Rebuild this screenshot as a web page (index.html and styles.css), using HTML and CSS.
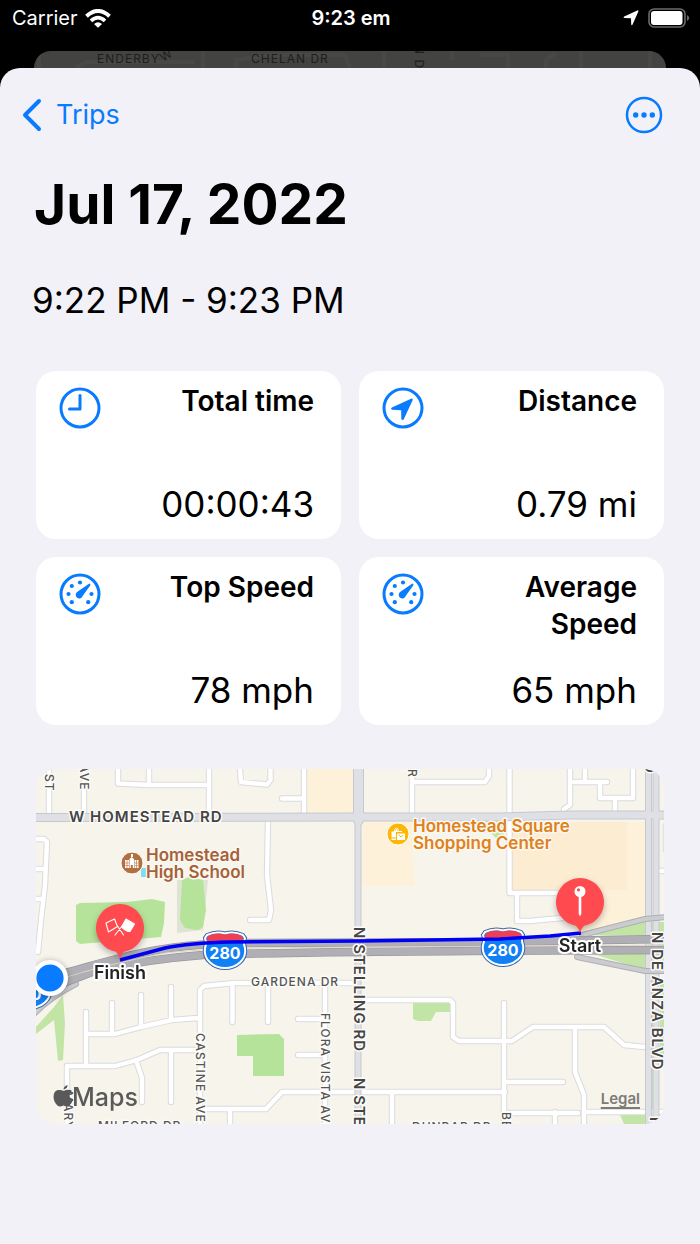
FILE: index.html
```html
<!DOCTYPE html>
<html lang="en">
<head>
<meta charset="utf-8">
<meta name="viewport" content="width=device-width, initial-scale=1">
<title>Jul 17, 2022</title>
<link rel="stylesheet" href="styles.css">
</head>
<body>
<header class="status">
  <div class="status-left">
    <span>Carrier</span>
    <svg class="wifi" viewBox="0 0 26 19" aria-hidden="true">
      <path d="M1.500 7.200Q13-3.200 24.500 7.200" stroke-width="4"/>
      <path d="M6 11.800Q13 5.400 20 11.800" stroke-width="3.600"/>
      <path d="M13 18.800L9 14.900Q13 11.400 17 14.900Z" class="wifi-dot"/>
    </svg>
  </div>
  <time class="status-time">9:23 em</time>
  <div class="status-right">
    <svg class="arrow" viewBox="0 0 16 16" aria-hidden="true"><path d="M14.300.4Q15.900.1 15.200 1.800L9.600 14.600Q8.800 15.800 8.200 14.500L8 8.200 1.400 8Q-.4 7.500 1.200 6.500Z"/></svg>
    <svg class="battery" viewBox="0 0 42 20" aria-hidden="true">
      <rect x="1" y="1" width="36" height="18" rx="5" fill="none" stroke="#6b6b6b" stroke-width="1.600"/>
      <rect x="3" y="3" width="31.500" height="14" rx="3" fill="#fff"/>
      <path d="M39 7Q43.500 10 39 13Z" fill="#6b6b6b"/>
    </svg>
  </div>
</header>

<div class="peek" aria-hidden="true">
  <svg class="peek-map" viewBox="34 51 632 17" preserveAspectRatio="xMidYMin slice">
    <g fill="none" stroke="#484847" stroke-width="4">
      <path d="M39 51V68M76 68L86 62H195M203 51V68M236 68V60L270 55H345L350 68M384 51V68M452 51V60M480 55H508V68M546 68V60L556 53M581 51V68M650 51V68"/>
    </g>
    <g class="peek-label">
      <text x="97" y="63">ENDERBY</text>
      <text transform="translate(163 62) rotate(-32)">W</text>
      <text x="251" y="63">CHELAN DR</text>
      <text transform="translate(415 45) rotate(90)">N D</text>
    </g>
  </svg>
</div>

<main class="sheet">
  <nav class="nav">
    <a class="back" href="#trips">
      <svg class="chevron" viewBox="0 0 20 34" aria-hidden="true"><path d="M17 3L3 17L17 31"/></svg>
      <span>Trips</span>
    </a>
    <button class="more" type="button" aria-label="More options">
      <svg viewBox="0 0 38 38" aria-hidden="true"><circle cx="19" cy="19" r="17" fill="none" stroke="currentColor" stroke-width="2.500"/><g fill="currentColor"><circle cx="10.700" cy="19" r="2.700"/><circle cx="19" cy="19" r="2.700"/><circle cx="27.300" cy="19" r="2.700"/></g></svg>
    </button>
  </nav>

  <h1 class="title">Jul 17, 2022</h1>
  <p class="period">9:22 PM - 9:23 PM</p>

  <section class="stats">
    <article class="card">
      <div class="card-head">
        <svg class="icon" viewBox="0 0 42 42" aria-hidden="true"><circle cx="21" cy="21" r="19"/><path d="M21 8.500V22H10.500"/></svg>
        <h2 class="card-title">Total time</h2>
      </div>
      <p class="value">00:00:43</p>
    </article>
    <article class="card">
      <div class="card-head">
        <svg class="icon" viewBox="0 0 42 42" aria-hidden="true"><circle cx="21" cy="21" r="19"/><path class="solid" d="M29 11.700Q31.300 11.200 30.600 13.300L21.800 32.200Q20 34.200 19.300 31.800L19.200 23.300 10.200 22.800Q8 22 9.900 20.500Z"/></svg>
        <h2 class="card-title">Distance</h2>
      </div>
      <p class="value">0.79 mi</p>
    </article>
    <article class="card">
      <div class="card-head">
        <svg class="icon" viewBox="0 0 42 42" aria-hidden="true"><circle cx="21" cy="21" r="19"/><g class="solid"><path d="M30.400 10.600Q32 11 31.200 12.500L23.800 22.700A3.600 3.600 0 1 1 18.400 18.800Z"/><circle cx="21" cy="9.500" r="2.100"/><circle cx="12.800" cy="13" r="2.100"/><circle cx="9.500" cy="21" r="2.100"/><circle cx="12.800" cy="29.200" r="2.100"/><circle cx="29.200" cy="29.200" r="2.100"/><circle cx="32.500" cy="21" r="2.100"/></g></svg>
        <h2 class="card-title">Top Speed</h2>
      </div>
      <p class="value">78 mph</p>
    </article>
    <article class="card">
      <div class="card-head">
        <svg class="icon" viewBox="0 0 42 42" aria-hidden="true"><circle cx="21" cy="21" r="19"/><g class="solid"><path d="M30.400 10.600Q32 11 31.200 12.500L23.800 22.700A3.600 3.600 0 1 1 18.400 18.800Z"/><circle cx="21" cy="9.500" r="2.100"/><circle cx="12.800" cy="13" r="2.100"/><circle cx="9.500" cy="21" r="2.100"/><circle cx="12.800" cy="29.200" r="2.100"/><circle cx="29.200" cy="29.200" r="2.100"/><circle cx="32.500" cy="21" r="2.100"/></g></svg>
        <h2 class="card-title">Average Speed</h2>
      </div>
      <p class="value">65 mph</p>
    </article>
  </section>

  <section class="map" aria-label="Trip map">
    <svg class="map-canvas" viewBox="36 769 628 355">
      <defs>
        <path id="streets" d="M49 769V815M84 769V815M118 769V783.500L149 785H209M149 769V785M209 769V815M240 769L241 782L267 784.500L270.500 780V769M304 769V818M282 798.500H304M412 769V815M412 782H485L489 776V769M268 820L267 875L271 910L269 920H250M34 839H44L47 842L45 885L41 920L38 952M34 869H44M34 899H42M509.500 769V893H562M517 893V921H530L562 918M570 769V805L564 809V815M574 782H607M585 769V782M600 782V798H633V769M615 798V814M666 871H658M67 1124V1066H115L137 1060L160 1050H198M86 1012V1066M86 1034H115L141 1027L172 1020L198 1018M112 1003V1033M141 995V1027M171 987V1020M171 1050V1102M136 1060L142 1078V1102M200 1124V990L204 986L235 983H358M232.500 984V1022M200 1109H266L282 1092H505M230 1109V1124M268 983V1022M325 983V1124M298 1019H325M298 1055H325M365 1000H450L453 1003V1037L459 1041H512L533 1027H604L624 1045L645 1047M392 1092V1124M504 1003V1124M504 1082H563M505 1113H578M555 1112V1124M575 1027V1072L584 1095V1124M586 1112H666M666 826V850"/>
        <path id="homestead" d="M34 817.500L360 817L500 817L570 815H666"/>
        <path id="arterials" d="M358 960V825M358 960V1126M648.500 769V1126M656 769V1126"/>
        <path id="highway" d="M34 980Q60 975 90 966L120 958Q170 945 230 943L500 942L666 939M34 992Q60 985 97 970Q150 959 203 955Q300 951 666 950"/>
        <path id="ramps" d="M34 1014Q50 997 76 984M582 935L645 919L666 917M577 957L645 971H666"/>
        <g id="shield">
          <path d="M-18-15Q-9-19 0-16.500Q9-19 18-15L20-12Q18-7 20-2C22 10 11 18 0 18C-11 18-22 10-20-2Q-18-7-20-12Z" fill="#1180f5" stroke="#3a66a7" stroke-width="4"/>
          <path d="M-18-15Q-9-19 0-16.500Q9-19 18-15L20-12Q18-7 20-2C22 10 11 18 0 18C-11 18-22 10-20-2Q-18-7-20-12Z" fill="#1180f5" stroke="#fff" stroke-width="2"/>
          <path d="M-17-14Q-9-18 0-15.500Q9-18 17-14L18.500-11L17.500-8H-17.500L-18.500-11Z" fill="#ee4054"/>
        </g>
        <path id="pin" d="M-4 23.700A24 24 0 1 1 4 23.700Q1.500 26 0 31Q-1.500 26-4 23.700Z"/>
      </defs>

      <rect x="36" y="769" width="628" height="355" fill="#f7f4eb"/>
      <g fill="#fef1da">
        <path d="M307 769H354V814H307ZM363 820H412V853L415 886H362ZM512 822H645V917L582 933L560 918V893H512Z"/>
        <path d="M512 822H627V890H512Z" fill="#fcecd2"/>
      </g>
      <path d="M177 880H208L203 930L177 933Z" fill="#dfe3d4"/>
      <g fill="#b5e399">
        <path d="M76 905L80 903L127 902L152 899L165 902L164 923L161 937L80 944L76 941ZM182 880L189 877L203 880L206 910L203 927L198 930L185 928L180 920ZM237 1035L279 1034L284 1039V1076H253V1056H237Z"/>
        <path d="M36 1027L54 1007L63 995L65 1023L63 1060L58 1061L54 1020L36 1034ZM413 1003H450V1012H436L431 1021H418L413 1019ZM470 820H507V826L500 842L490 832ZM592 935L645 921V936ZM590 953H645V970ZM651 922H664V968H651ZM651 980H654V1110H651ZM660 980H664V1060H660ZM620 1115H645V1124H624Z" fill="#c2e5a5"/>
      </g>
      <rect x="141" y="868" width="5" height="9" fill="#84daf5"/>

      <g fill="none" stroke-linejoin="round" stroke-linecap="round">
        <use href="#streets" stroke="#dadbdd" stroke-width="6.400"/>
        <use href="#streets" stroke="#fff" stroke-width="4.400"/>
        <use href="#homestead" stroke="#c6c8cd" stroke-width="9"/>
        <path d="M358.500 765V820" stroke="#c6c8cd" stroke-width="11"/>
        <use href="#arterials" stroke="#c6c8cd" stroke-width="7"/>
        <use href="#homestead" stroke="#dfe0e5" stroke-width="7"/>
        <path d="M358.500 765V820" stroke="#dfe0e5" stroke-width="9"/>
        <use href="#arterials" stroke="#dfe0e5" stroke-width="5"/>
        <use href="#ramps" stroke="#aeb0b4" stroke-width="6"/>
        <use href="#ramps" stroke="#cbccd0" stroke-width="4"/>
        <use href="#highway" stroke="#98989c" stroke-width="8.500"/>
        <use href="#highway" stroke="#afafb5" stroke-width="7"/>
        <path d="M60 979Q100 966 165 953Q210 948 300 947.500L666 945" stroke="#ddd7c6" stroke-width="1"/>
      </g>

      <g class="road road-major">
        <text x="69" y="822">W HOMESTEAD RD</text>
        <text transform="translate(354 927) rotate(90)">N STELLING RD</text>
        <text transform="translate(354 1078) rotate(90)">N STELLING RD</text>
        <text transform="translate(652 932) rotate(90)">N DE ANZA BLVD</text>
        <text transform="translate(645 762) rotate(90)">D</text>
        <text transform="translate(650 1117) rotate(90)">N</text>
      </g>
      <g class="road">
        <text transform="translate(45 774) rotate(90)">ST</text>
        <text transform="translate(80 764) rotate(90)">AVE</text>
        <text transform="translate(408 769) rotate(90)">R</text>
        <text x="251" y="986">GARDENA DR</text>
        <text transform="translate(196 1033) rotate(90)">CASTINE AVE</text>
        <text transform="translate(321 1013) rotate(90)">FLORA VISTA AVE</text>
        <text transform="translate(64 1091) rotate(90)">MARY AVE</text>
        <text transform="translate(502 1112) rotate(90)">BEND</text>
        <text x="98" y="1130">MILFORD DR</text>
        <text x="412" y="1131">DUNBAR DR</text>
      </g>

      <use href="#shield" transform="translate(225 950)"/>
      <use href="#shield" transform="translate(503 947)"/>
      <use href="#shield" transform="translate(30 990)"/>
      <g class="shield-text">
        <text x="225" y="959">280</text>
        <text x="503" y="956">280</text>
        <text x="26" y="1000">280</text>
      </g>

      <g class="place school">
        <circle cx="132" cy="863" r="11" fill="#b2703f" stroke="#fff"/>
        <path d="M125 860H129V868H125ZM134.500 860H138.500V868H134.500ZM129.500 859L131.800 857L134 859V868H132.800V865H130.800V868H129.500ZM131 854H133V857H131Z" fill="#fff"/>
        <path d="M125 863H129M134.500 863H138.500M125 865.500H129M134.500 865.500H138.500M127 860V868M136.500 860V868" stroke="#b2703f" stroke-width=".6"/>
        <text x="146" y="861">Homestead</text>
        <text x="146" y="878">High School</text>
      </g>
      <g class="place shop">
        <circle cx="398" cy="834" r="11" fill="#fdb602" stroke="#fff"/>
        <path d="M391.500 831.500H394V830Q396.500 825.500 399 830V831H402V832H396V837.500H391.500ZM391.500 838.500H396V840H391.500ZM397 833.500H405V840H397Z" fill="#fff"/>
        <path d="M395 831V830Q396.500 827 398 830V831" fill="none" stroke="#fdb602" stroke-width=".7"/>
        <path d="M399 835Q401 838.500 403 835" fill="none" stroke="#fdb602"/>
        <text x="413" y="832">Homestead Square</text>
        <text x="413" y="849">Shopping Center</text>
      </g>

      <path d="M120 960L165 948Q190 943 230 942L360 941L500 939L550 936L581 933" fill="none" stroke="#0000f5" stroke-width="3.400"/>

      <g class="pins">
        <use href="#pin" transform="translate(120 928)"/>
        <use href="#pin" transform="translate(580 902)"/>
      </g>
      <g fill="none" stroke="#fff" stroke-width="1.100" stroke-linejoin="round" stroke-linecap="round">
        <path d="M106 923L114.500 919L117.500 926.500L108.500 932ZM117.500 926L123.500 935M122.500 925.500L115 935"/>
        <path d="M126 919L134.500 924L130 931.500Q126 932 121.500 927Z" fill="#fff"/>
      </g>
      <path d="M578.700 895H581.300V914L580 916.500L578.700 914Z" fill="#fff"/>
      <circle cx="580" cy="891.500" r="5.500" fill="#fff"/>
      <circle cx="578.500" cy="889.800" r="1.600" fill="#ff4a50"/>

      <g class="pin-label">
        <text x="120" y="979">Finish</text>
        <text x="580" y="952">Start</text>
      </g>
      <circle class="me" cx="50" cy="978" r="18"/>
      <circle cx="50" cy="978" r="13.600" fill="#087bff"/>

      <path d="M70.500 1090Q66 1089 64 1091Q61 1089.500 58 1090Q53.500 1091 53.500 1097Q54 1103 58 1106Q60 1107 63.500 1105.500Q67 1107.200 69 1106Q72 1103 73 1100Q69.500 1098 69.500 1095.500Q69.500 1092.500 72 1091ZM63.500 1089.500Q63.500 1086 67.500 1085Q68 1088.500 63.500 1089.500Z" fill="#595959"/>
      <text class="brand" x="72" y="1106">Maps</text>
    </svg>
    <a class="legal" href="#legal">Legal</a>
  </section>
</main>
</body>
</html>
```

FILE: styles.css
```css
* {
  box-sizing: border-box;
}

body {
  margin: 0;
  min-height: 100vh;
  display: flex;
  flex-direction: column;
  background: #000;
  color: #000;
  font-family: Inter, "Liberation Sans", sans-serif;
}

h1,
h2,
p {
  margin: 0;
}

svg {
  display: block;
}

.status {
  display: grid;
  grid-template-columns: 1fr auto 1fr;
  align-items: center;
  padding: 6px 10px 21px 12px;
  color: #fff;
  font-size: 20px;
  line-height: 24px;
}

.status-left,
.status-right {
  display: flex;
  align-items: center;
}

.status-left {
  gap: 7px;
}

.status-right {
  justify-content: flex-end;
  gap: 9px;
}

.status-time {
  font-weight: 600;
}

.wifi {
  width: 26px;
  fill: none;
  stroke: #fff;
}

.wifi-dot {
  fill: #fff;
  stroke: none;
}

.arrow {
  width: 16px;
  fill: #fff;
}

.battery {
  width: 42px;
}

.peek {
  height: 17px;
  margin: 0 34px;
  border-radius: 17px 17px 0 0;
  background: #434342;
  overflow: hidden;
}

.peek-map {
  width: 100%;
  height: 100%;
}

.peek-label {
  fill: #1e1e1e;
  font-size: 12px;
  letter-spacing: 1px;
}

.sheet {
  flex: 1;
  padding: 28px 36px 40px;
  border-radius: 20px 20px 0 0;
  background: #f2f1f7;
}

.nav {
  display: flex;
  align-items: center;
  justify-content: space-between;
  margin: 0 1px 0 -14px;
  color: #087bff;
}

.back {
  display: flex;
  align-items: center;
  gap: 14px;
  color: inherit;
  font-size: 27px;
  line-height: 38px;
  text-decoration: none;
}

.chevron {
  width: 20px;
  fill: none;
  stroke: currentColor;
  stroke-width: 4px;
  stroke-linecap: round;
  stroke-linejoin: round;
}

.more {
  width: 38px;
  height: 38px;
  padding: 0;
  border: 0;
  background: none;
  color: inherit;
}

.title {
  margin: 35px 0 0 -2px;
  font-size: 55px;
  line-height: 70px;
  font-weight: 700;
}

.period {
  margin: 37px 0 0 -4px;
  font-size: 35px;
  line-height: 48px;
}

.stats {
  display: grid;
  grid-template-columns: 1fr 1fr;
  gap: 18px;
  margin-top: 47px;
}

.card {
  display: flex;
  flex-direction: column;
  justify-content: space-between;
  min-height: 168px;
  padding: 12px 27px 11px 23px;
  border-radius: 20px;
  background: #fff;
  text-align: right;
}

.card-head {
  display: flex;
  justify-content: space-between;
  gap: 40px;
}

.icon {
  flex: none;
  width: 42px;
  height: 42px;
  margin-top: 4px;
  fill: none;
  stroke: #087bff;
  stroke-width: 3px;
  stroke-linecap: round;
  stroke-linejoin: round;
}

.solid {
  fill: #087bff;
  stroke: none;
}

.card-title {
  font-size: 28px;
  line-height: 37px;
  font-weight: 600;
}

.value {
  font-size: 35px;
  line-height: 48px;
}

.map {
  position: relative;
  margin-top: 44px;
  border-radius: 20px;
  overflow: hidden;
}

.map-canvas {
  width: 100%;
}

.map-canvas text {
  paint-order: stroke;
  stroke-linejoin: round;
}

.road {
  fill: #555;
  stroke: #fcfbf7;
  stroke-width: 3px;
  font-size: 12px;
  font-weight: 500;
  letter-spacing: 1px;
}

.road-major {
  fill: #444;
  font-size: 15px;
  font-weight: 600;
}

.shield-text {
  fill: #fff;
  font-size: 16px;
  font-weight: 700;
  text-anchor: middle;
}

.place text {
  stroke: #fbf8f1;
  stroke-width: 3px;
  font-size: 17px;
  font-weight: 600;
}

.school text {
  fill: #a5623a;
}

.shop text {
  fill: #df811c;
}

.pins {
  fill: #ff4a50;
  filter: drop-shadow(0 3px 3px #0004);
}

.pin-label {
  fill: #222;
  stroke: #fff;
  stroke-width: 4px;
  font-size: 18px;
  font-weight: 600;
  text-anchor: middle;
}

.me {
  fill: #fff;
  filter: drop-shadow(0 1px 3px #0005);
}

.brand {
  fill: #5a5a5a;
  font-size: 25px;
  font-weight: 500;
}

.legal {
  position: absolute;
  right: 24px;
  bottom: 15px;
  color: #7b7b78;
  font-size: 15px;
  line-height: 20px;
  font-weight: 600;
  text-decoration-thickness: 2px;
  text-underline-offset: 3px;
}
```
